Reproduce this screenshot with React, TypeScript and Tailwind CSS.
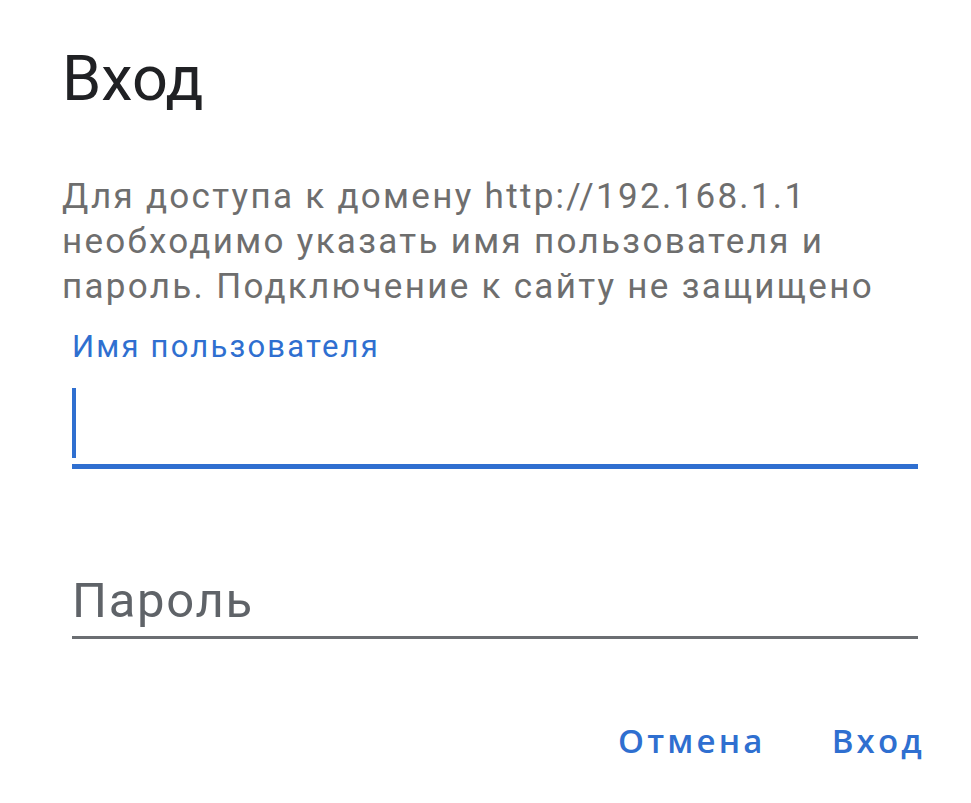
export default function App() {
  return (
    <div className="min-h-[803px] w-[971px] bg-white font-['Roboto',sans-serif]">
      <div className="pl-[62px] pr-[50px] pt-[48px]">
        <h1 className="text-[63px] leading-[62px] font-normal text-[#202124]">Вход</h1>
        <p className="mt-[64px] text-[35px] leading-[45px] tracking-[2.3px] text-[#6e6e6e]">
          Для доступа к домену http://192.168.1.1 необходимо указать имя пользователя и пароль. Подключение к сайту не защищено
        </p>
        <div className="pl-[10px] pr-[3px]">
          <label className="mt-[18px] block text-[31px] leading-[40px] tracking-[2.2px] text-[#2f6fd0]">
            Имя пользователя
          </label>
          <div className="mt-[16px] flex h-[86px] items-start border-b-[5px] border-[#2f6fd0]">
            <span className="mt-[5px] block h-[70px] w-[4px] bg-[#2f6fd0]" />
          </div>
          <div className="mt-[108px] flex h-[62px] items-end border-b-[3px] border-[#6b6e72] pb-[5px]">
            <span className="text-[49px] leading-[60px] tracking-[1.7px] text-[#5f6368]">Пароль</span>
          </div>
        </div>
        <div className="mt-[82px] flex justify-end gap-[66px] font-['Open_Sans',sans-serif]">
          <button className="text-[33px] leading-[40px] font-semibold tracking-[3.2px] text-[#2f6fd0]">Отмена</button>
          <button className="-mr-[4px] text-[33px] leading-[40px] font-semibold tracking-[3.2px] text-[#2f6fd0]">Вход</button>
        </div>
      </div>
    </div>
  );
}
